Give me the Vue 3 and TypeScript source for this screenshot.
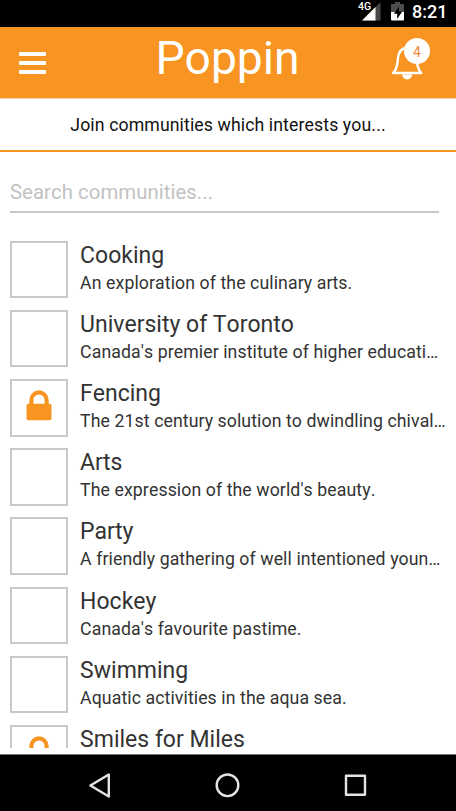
<script setup lang="ts">
interface Community {
  name: string
  description: string
  locked?: boolean
}

const notifications = 4

const communities: Community[] = [
  { name: 'Cooking', description: 'An exploration of the culinary arts.' },
  { name: 'University of Toronto', description: "Canada's premier institute of higher educati…" },
  { name: 'Fencing', description: 'The 21st century solution to dwindling chival…', locked: true },
  { name: 'Arts', description: "The expression of the world's beauty." },
  { name: 'Party', description: 'A friendly gathering of well intentioned youn…' },
  { name: 'Hockey', description: "Canada's favourite pastime." },
  { name: 'Swimming', description: 'Aquatic activities in the aqua sea.' },
  { name: 'Smiles for Miles', description: '', locked: true },
]
</script>

<template>
  <div class="screen">
    <div class="status">
      <svg class="signal" viewBox="0 0 26 24" width="26" height="24">
        <path d="M25.5 2v18.5H7z" fill="#474747" />
        <path d="M20.5 7v13.5H7z" fill="#fff" />
      </svg>
      <span class="network">4G</span>
      <svg class="battery" viewBox="0 0 13 19" width="13" height="19">
        <path d="M4 0h5v2h3q1 0 1 1v7H0V3q0-1 1-1h3z" fill="#4d4d4d" />
        <path d="M0 10h13v7.5q0 1-1 1H1q-1 0-1-1z" fill="#fff" />
        <path d="M8 4.5 2.8 11.8h3.4V17l5-7.5H8z" fill="#000" />
      </svg>
      <span class="clock">8:21</span>
    </div>

    <header class="header">
      <button class="menu" aria-label="Menu"><i></i><i></i><i></i></button>
      <h1>Poppin</h1>
      <button class="bell" aria-label="Notifications">
        <svg viewBox="0 0 40 44" width="40" height="44">
          <path
            d="M4.2 36C8.4 32 8.3 27 8.9 21.5C9.4 15.5 12 11.2 18 10.5C24 11.2 27 15.5 27.6 21.5C28.1 27 28.2 32 32.2 36Z"
            fill="none" stroke="#fff" stroke-width="2.5" stroke-linejoin="round"
          />
          <path d="M13.2 37.5h10a5 5 0 0 1-10 0z" fill="#fff" />
        </svg>
        <span class="badge">{{ notifications }}</span>
      </button>
    </header>

    <p class="intro"><span>Join communities which interests you...</span></p>

    <input class="search" type="text" placeholder="Search communities..." />

    <ul class="list">
      <li v-for="item in communities" :key="item.name" class="row">
        <div class="thumb">
          <svg v-if="item.locked" viewBox="0 0 26 31" width="26" height="31">
            <path d="M5.4 15V10a7.6 7.6 0 0 1 15.2 0v5" fill="none" stroke="#f79422" stroke-width="4.2" />
            <rect x="0.5" y="13.8" width="25" height="16.4" rx="2" fill="#f79422" />
          </svg>
        </div>
        <div class="text">
          <h2>{{ item.name }}</h2>
          <p v-if="item.description">{{ item.description }}</p>
        </div>
      </li>
    </ul>

    <nav class="nav">
      <svg viewBox="0 0 456 56" width="456" height="56">
        <g fill="none" stroke="#e4e4e4" stroke-width="2.4" stroke-linejoin="round">
          <path d="M108.8 19.5v22L90.4 30.5z" />
          <circle cx="227.5" cy="30.3" r="10.8" />
          <rect x="346" y="20.8" width="19" height="19" />
        </g>
      </svg>
    </nav>
  </div>
</template>

<style>
body {
  margin: 0;
  overflow: hidden;
}
</style>

<style scoped>
.screen {
  width: 456px;
  height: 811px;
  display: flex;
  flex-direction: column;
  overflow: hidden;
  background: #fff;
  font-family: Roboto, sans-serif;
  font-kerning: none;
  color: #333;
}

h1,
h2,
p,
ul {
  margin: 0;
  padding: 0;
  font-weight: 400;
}

button {
  border: 0;
  padding: 0;
  background: none;
  font: inherit;
}

.status {
  position: relative;
  flex: none;
  height: 27px;
  background: #000;
  color: #fff;
  display: flex;
  align-items: flex-start;
  justify-content: flex-end;
  padding-right: 8.5px;
}

.signal {
  margin-right: 9.5px;
}

.network {
  position: absolute;
  left: 358px;
  top: 1px;
  font-size: 10.5px;
  line-height: 12px;
  font-weight: 500;
}

.battery {
  margin: 2px 8.5px 0 0;
}

.clock {
  font-size: 18px;
  line-height: 24px;
  font-weight: 500;
}

.header {
  flex: none;
  height: 72px;
  border-bottom: 1px solid #fbd3a4;
  box-sizing: border-box;
  background: #f79422;
  background-clip: padding-box;
  display: grid;
  grid-template-columns: 65px 1fr 66px;
  color: #fff;
}

.menu {
  display: flex;
  flex-direction: column;
  gap: 4.5px;
  padding: 25px 0 0 19px;
}

.menu i {
  width: 27px;
  height: 4.4px;
  border-radius: 1px;
  background: #fff;
}

h1 {
  font-size: 46.2px;
  line-height: 62px;
  text-align: center;
}

.bell {
  position: relative;
}

.bell svg {
  position: absolute;
  left: -1px;
  top: 10px;
}

.badge {
  position: absolute;
  left: 14px;
  top: 11px;
  width: 26px;
  height: 26px;
  border-radius: 50%;
  background: #fff;
  color: #ef8a3c;
  font-size: 14px;
  line-height: 29px;
  text-align: center;
}

.intro {
  flex: none;
  height: 53px;
  box-sizing: border-box;
  border-bottom: 2px solid #f79422;
  color: #111;
  font-size: 17.7px;
  line-height: 52px;
  letter-spacing: 0.1px;
  text-align: center;
}

.search {
  flex: none;
  width: 429px;
  height: 45px;
  margin: 16px 0 0 10px;
  padding: 5px 0 0;
  box-sizing: border-box;
  border: 0;
  border-bottom: 2px solid #c7c7c7;
  background: none;
  font-family: inherit;
  font-kerning: none;
  font-size: 20.3px;
  letter-spacing: 0.08px;
}

.search::placeholder {
  color: #c2c2c2;
  opacity: 1;
}

.list {
  list-style: none;
  margin-top: 27.8px;
  height: 507.2px;
  overflow: hidden;
}

.row {
  display: flex;
  height: 69.15px;
  padding-left: 10px;
}

.thumb {
  flex: none;
  width: 57.5px;
  height: 57.5px;
  box-sizing: border-box;
  border: 2px solid #c9c9c9;
  display: flex;
  justify-content: center;
  padding-top: 9.3px;
}

.text {
  padding-left: 12.6px;
  white-space: nowrap;
}

h2 {
  font-size: 23px;
  line-height: 29px;
}

.text p {
  font-size: 17.7px;
  line-height: 27.6px;
  letter-spacing: 0.09px;
}

.nav {
  flex: none;
  margin-top: auto;
  height: 57px;
  box-sizing: border-box;
  border-top: 1px solid #777;
  background: #000;
  background-clip: padding-box;
}

.nav svg {
  display: block;
}
</style>
